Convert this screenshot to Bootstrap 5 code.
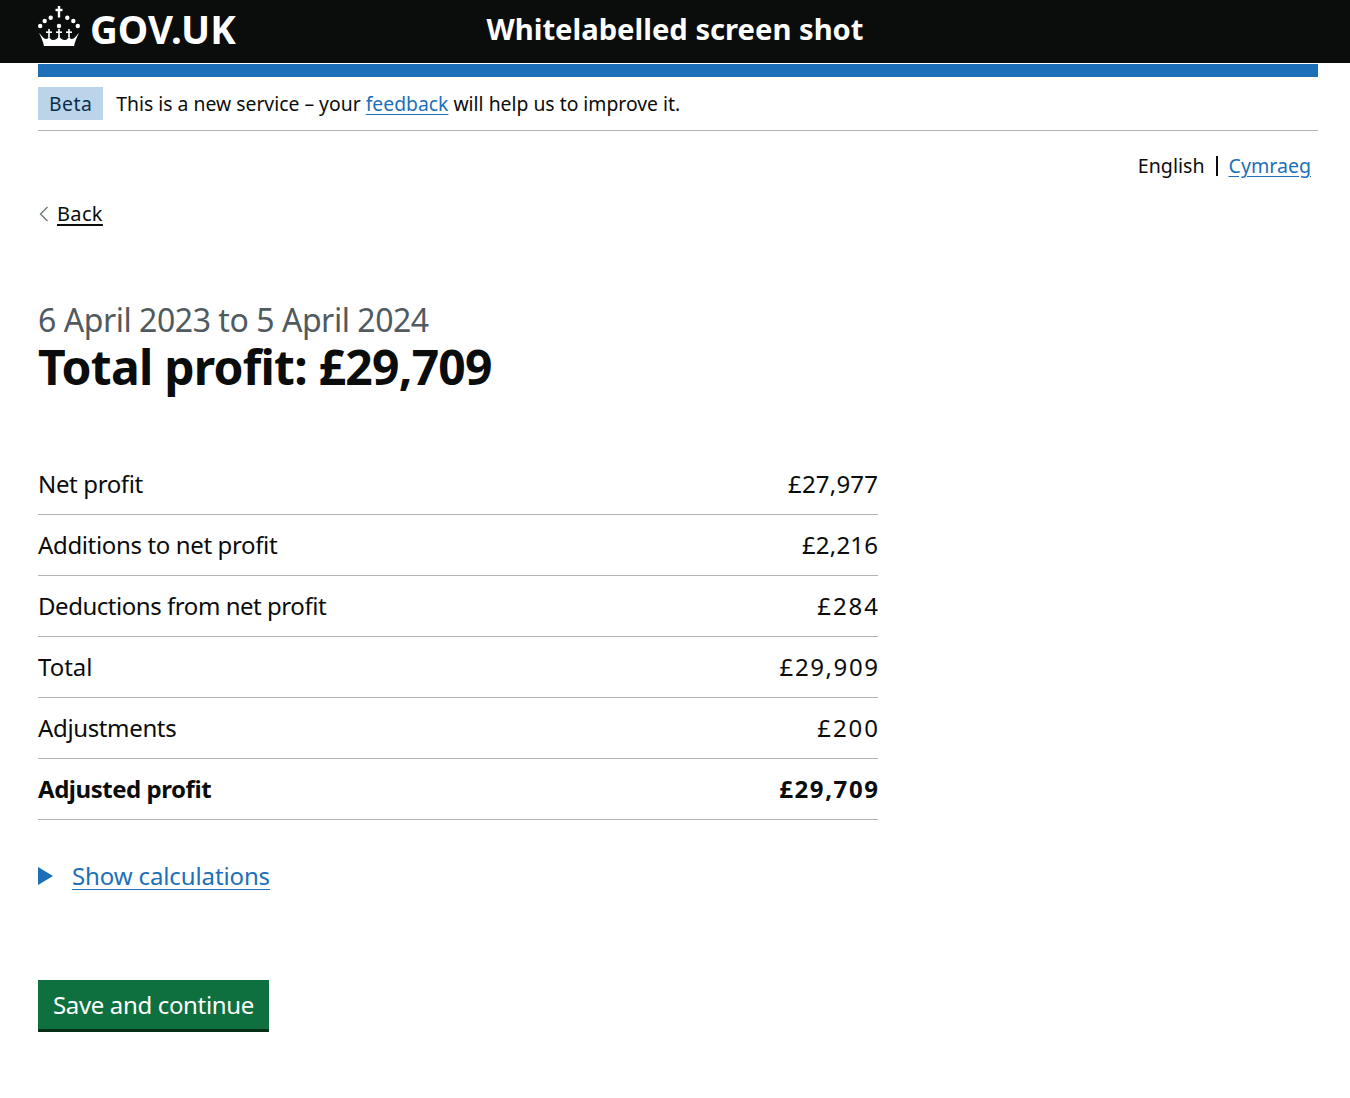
<!DOCTYPE html>
<html lang="en"><head><meta charset="utf-8"><title>Total profit</title>
<link href="https://cdn.jsdelivr.net/npm/bootstrap@5.3.0/dist/css/bootstrap.min.css" rel="stylesheet">
<style>
body{font-family:"Noto Sans","Open Sans",sans-serif;color:#0b0c0c;background:#fff}
.topbar{background:#0b0c0c;height:63px;color:#fff;padding-bottom:4px}
.brandbox{margin-left:38px}
.crest{width:43px;height:40px;flex:none;margin-bottom:8px}
.logotext{font-size:38.5px;font-weight:700;line-height:1;margin-left:9px}
.service{font-size:29.2px;font-weight:700;line-height:1;left:0;right:0;text-align:center}
.wrapx{margin:0 32px 0 38px}
.bluebar{height:13px;background:#1d70b8;margin-top:1px}
.phase{height:54px;border-bottom:1px solid #b1b4b6;font-size:19.35px}
.phasetag{background:#bbd4ea;color:#0c2d4a;padding:0 11px;height:33px;line-height:33px;margin-right:13px;letter-spacing:.5px}
a.gl{color:#1d70b8;text-underline-offset:3px}
.langs{font-size:19.6px;margin-top:21px;padding-right:7px;height:27px}
.sep{border-left:2px solid #0b0c0c;height:20px;margin:0 11px 0 11px}
.backl{font-size:20px;letter-spacing:.35px;margin-top:21px;height:27px}
.backl a{color:#0b0c0c;margin-left:8px;text-underline-offset:3px}
.chev{width:11px;height:16px}
.cap{font-size:32px;letter-spacing:-.46px;color:#505a5f;line-height:39px;margin-top:73px}
.ttl{font-size:48px;font-weight:700;line-height:55px;margin:0;letter-spacing:-.76px}
.sumtab{width:840px;margin-top:60px;font-size:24px}
.sumrow{height:61px;border-bottom:1px solid #b1b4b6}
.lbl{letter-spacing:-.36px}
.lblx{letter-spacing:-.46px}
.numw{letter-spacing:1.6px;margin-right:-1.6px}
.numx{letter-spacing:1.95px;margin-right:-1.95px}
.nums{letter-spacing:.2px;margin-right:-.2px}
.showc{margin-top:39px;font-size:24px;height:33px}
.showc a{letter-spacing:-.12px;text-underline-offset:4px;text-decoration-thickness:1px}
.tri{width:15px;height:18px;margin-right:19px}
.savebtn{background:#0e703e;color:#fff;font-size:24px;letter-spacing:-.35px;border:0;border-radius:0;border-bottom:3px solid #062f18;height:52px;padding:0 15px;margin-top:88px}
</style></head><body>
<div class="topbar position-relative d-flex align-items-center">
<div class="d-flex align-items-center brandbox">
<svg class="crest" viewBox="0 0 43 40" fill="#fff"><rect x="19.800" y="0" width="2.400" height="11.500"/><rect x="17.500" y="2.800" width="7" height="2.400"/><circle cx="12.700" cy="11.700" r="2.200"/><circle cx="29.300" cy="11.700" r="2.200"/><circle cx="6.700" cy="15" r="2.200"/><circle cx="35.300" cy="15" r="2.200"/><circle cx="2.200" cy="20" r="2.200"/><circle cx="39.800" cy="20" r="2.200"/><circle cx="21" cy="20" r="2.200"/><rect x="10.200" y="23" width="1.600" height="8"/><rect x="8" y="25.400" width="6" height="1.600"/><rect x="20.200" y="23" width="1.600" height="8"/><rect x="18" y="25.400" width="6" height="1.600"/><rect x="30.200" y="23" width="1.600" height="8"/><rect x="28" y="25.400" width="6" height="1.600"/><path d="M1 27C4 30 6 33 8 33 10 33 10.500 31 11 30 11.500 32 13 34 15 34 18 34 20 32 21 30 22 32 24 34 27 34 29 34 30.500 32 31 30 31.500 31 32 33 34 33 36 33 38 30 41 27 39 31 37 35 36 40H6C5 35 3 31 1 27z"/></svg>
<span class="logotext">GOV.UK</span></div>
<div class="service position-absolute">Whitelabelled screen shot</div>
</div>
<div class="wrapx">
<div class="bluebar"></div>
<div class="phase d-flex align-items-center"><span class="phasetag">Beta</span><span>This is a new service – your <a class="gl" href="#">feedback</a> will help us to improve it.</span></div>
<div class="langs d-flex justify-content-end align-items-center"><span>English</span><span class="sep"></span><a class="gl" href="#">Cymraeg</a></div>
<div class="backl d-flex align-items-center"><svg class="chev" viewBox="0 0 11 16"><path d="M9.500 1L2.500 8l7 7" fill="none" stroke="#6f777b" stroke-width="1.4"/></svg><a href="#">Back</a></div>
<div class="cap">6 April 2023 to 5 April 2024</div>
<h1 class="ttl">Total profit: £29,709</h1>
<div class="sumtab">
<div class="sumrow d-flex justify-content-between align-items-center"><span class="lbl">Net profit</span><span class="nums">£27,977</span></div>
<div class="sumrow d-flex justify-content-between align-items-center"><span class="lbl">Additions to net profit</span><span class="nums">£2,216</span></div>
<div class="sumrow d-flex justify-content-between align-items-center"><span class="lblx">Deductions from net profit</span><span class="numx">£284</span></div>
<div class="sumrow d-flex justify-content-between align-items-center"><span>Total</span><span class="numw">£29,909</span></div>
<div class="sumrow d-flex justify-content-between align-items-center"><span class="lbl">Adjustments</span><span class="numx">£200</span></div>
<div class="sumrow d-flex justify-content-between align-items-center fw-bold"><span class="lblx">Adjusted profit</span><span class="numw">£29,709</span></div>
</div>
<div class="showc d-flex align-items-center"><svg class="tri" viewBox="0 0 15 18"><path d="M0 0l15 9L0 18z" fill="#1d70b8"/></svg><a class="gl" href="#">Show calculations</a></div>
<button class="btn savebtn">Save and continue</button>
</div>
<script src="https://cdn.jsdelivr.net/npm/bootstrap@5.3.0/dist/js/bootstrap.bundle.min.js"></script>
</body></html>
